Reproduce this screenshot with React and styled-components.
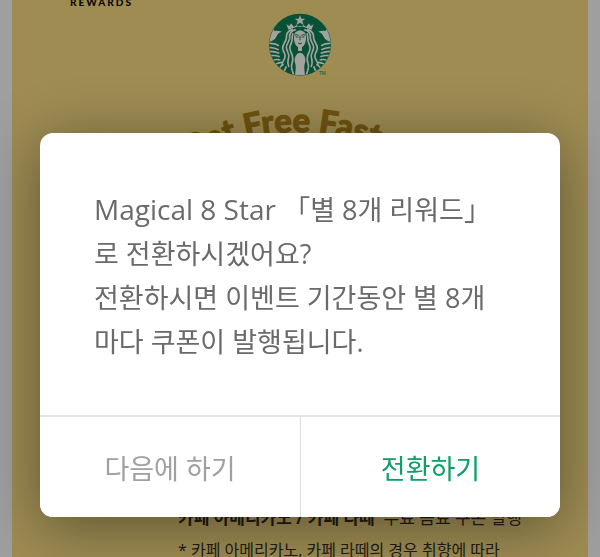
import React from 'react';
import styled, { createGlobalStyle } from 'styled-components';

const GlobalStyle = createGlobalStyle`
    * {
        box-sizing: border-box;
    }

    body {
        margin: 0;
        overflow: hidden;
        background-color: #9f9f9f;
        font-family: 'Open Sans', 'Noto Sans CJK KR', sans-serif;
    }
`;

const SirenLogo = () => {
    return (
        <Logo viewBox='-17 -17 240 240' role='img' aria-label='Starbucks'>
            <defs>
                <clipPath id='disc'>
                    <circle cx='103' cy='102' r='92' />
                </clipPath>
            </defs>
            <circle cx='103' cy='102' r='93' fill='#075137' />
            <g clipPath='url(#disc)' fill='#a2a39f'>
                {/* star and crown */}
                <path d='M103 13l4 11h12l-9 7 4 12-11-7-11 7 4-12-9-7h12z' />
                <path d='M62 41l9 5 5-8 9 11 7-6 11 7 11-7 7 6 9-11 5 8 9-5-7 17q-10-6-17-7-9-5-17-5t-17 5q-7 1-17 7z' />
                {/* tail fins */}
                <path d='M10 46q12 8 17 15 8-3 22 2-14 4-16 14-3 9-14 14-8 2-15 10 9-18 11-30-2-13-5-25z' />
                <path d='M196 46q-12 8-17 15-8-3-22 2 14 4 16 14 3 9 14 14 8 2 15 10-9-18-11-30 2-13 5-25z' />
                {/* face and body */}
                <path d='M85 77q1-16 18-18 17 2 18 18v10q-2 16-12 22v12h-12v-12q-10-6-12-22z' />
                <path d='M90 136q5-10 13-10t13 10q6 12 1 24-3 10 2 40h-32q5-30 2-40-5-12 1-24z' />
            </g>
            {/* hair strands, then the tail scales */}
            <g clipPath='url(#disc)' fill='none' stroke='#a2a39f' strokeWidth='5'>
                <path d='M90 57c-18 4-19 16-18 25s-11 18-10 29 10 18 7 29-5 17 1 29' />
                <path d='M82 56c-20 5-20 18-20 27s-12 18-11 30 10 16 7 27-10 16-9 24' />
                <path d='M82 68c-5 13 0 20-5 29s-7 17-1 28 7 22 3 33-1 20 5 34' />
                <path d='M116 57c18 4 19 16 18 25s11 18 10 29-10 18-7 29 5 17-1 29' />
                <path d='M124 56c20 5 20 18 20 27s12 18 11 30-10 16-7 27 10 16 9 24' />
                <path d='M124 68c5 13 0 20 5 29s7 17 1 28-7 22-3 33 1 20-5 34' />
                <path d='M9 98q17-1 31 7M9 110q15 0 30 7M12 122q14 0 29 6M16 135q13-2 26 3M23 148q11-3 21 0M31 160q8-5 18-5M41 172q7-8 13-11M54 183q6-9 8-16' />
                <path d='M197 98q-17-1-31 7M197 110q-15 0-30 7M194 122q-14 0-29 6M190 135q-13-2-26 3M183 148q-11-3-21 0M175 160q-8-5-18-5M165 172q-7-8-13-11M152 183q-6-9-8-16' />
            </g>
            <g fill='none' stroke='#075137' strokeWidth='3'>
                <path d='M87 74q6-4 12 0M107 74q6-4 12 0M103 75v14M97 97q6 5 12 0' />
                <path d='M90 79h8M108 79h8' />
            </g>
            <LogoMark x='160' y='192'>TM</LogoMark>
        </Logo>
    );
};

const PromoCard = () => {
    return (
        <Card>
            <Brand>REWARDS</Brand>
            <SirenLogo />
            <Banner viewBox='0 0 260 60'>
                <path id='arc' d='M-79 242a205 205 0 0 1 410 0' fill='none' />
                <BannerText>
                    <textPath href='#arc' startOffset='50%' textAnchor='middle'>
                        Get Free Faster
                    </textPath>
                </BannerText>
            </Banner>
            <Benefits>
                <Benefit>
                    <strong>카페 아메리카노 / 카페 라떼</strong>&nbsp; 무료 음료 쿠폰 발행
                </Benefit>
                <BenefitNote>* 카페 아메리카노, 카페 라떼의 경우 취향에 따라</BenefitNote>
            </Benefits>
        </Card>
    );
};

const App = () => {
    return (
        <>
            <GlobalStyle />
            <PromoCard />
            <Overlay>
                <Dialog role='dialog' aria-modal='true' aria-describedby='message'>
                    <Message id='message'>
                        <EventName>Magical 8 Star </EventName>
                        「별 8개 리워드」
                        <br />
                        로 전환하시겠어요?
                        <br />
                        전환하시면 이벤트 기간동안 별 8개
                        <br />
                        마다 쿠폰이 발행됩니다.
                    </Message>
                    <Actions>
                        <ActionButton type='button'>다음에 하기</ActionButton>
                        <ActionButton type='button' $primary>
                            전환하기
                        </ActionButton>
                    </Actions>
                </Dialog>
            </Overlay>
        </>
    );
};

const Card = styled.main`
    display: flex;
    flex-direction: column;
    align-items: center;
    min-height: 100vh;
    margin: 0 12px;
    background-color: #9e8c53;
    color: #211c11;
`;

const Brand = styled.div`
    align-self: flex-start;
    padding-left: 58px;
    color: #080704;
    font-family: Lato, sans-serif;
    font-size: 10px;
    font-weight: 900;
    letter-spacing: 2px;
    line-height: 5px;
`;

const Logo = styled.svg`
    width: 80px;
    height: 80px;
`;

const LogoMark = styled.text`
    fill: #075137;
    font-family: 'Liberation Sans', sans-serif;
    font-size: 14px;
`;

const Banner = styled.svg`
    width: 260px;
    height: 60px;
    margin-top: 10px;
`;

const BannerText = styled.text`
    fill: #6f5310;
    stroke: #6f5310;
    stroke-width: 1px;
    font-family: Lato, sans-serif;
    font-size: 33px;
    font-weight: 900;
`;

const Benefits = styled.section`
    align-self: flex-start;
    padding: 351px 0 0 166px;
    white-space: nowrap;
`;

const Benefit = styled.p`
    margin: 0;
    font-size: 17px;
    line-height: 24px;
`;

const BenefitNote = styled.p`
    margin: 8px 0 0;
    font-size: 16px;
    line-height: 24px;
`;

const Overlay = styled.div`
    position: fixed;
    top: 0;
    left: 0;
    width: 100%;
    height: 100%;
    padding: 133px 40px 40px;
`;

const Dialog = styled.div`
    overflow: hidden;
    border-radius: 13px;
    background-color: #fff;
    box-shadow: 0 10px 60px rgba(0, 0, 0, 0.4);
`;

const Message = styled.p`
    margin: 0;
    padding: 55px 54px 51px;
    color: #6a6a6a;
    font-size: 27px;
    line-height: 44px;
    white-space: nowrap;
`;

const EventName = styled.span`
    font-size: 28px;
    line-height: 1;
    white-space: pre;
`;

const Actions = styled.div`
    display: grid;
    grid-template-columns: 1fr 1fr;
    border-top: 2px solid #e3e3e3;
`;

const ActionButton = styled.button`
    height: 100px;
    padding: 0;
    border: 0;
    border-left: ${({ $primary }) => ($primary ? '1px solid #dcdcdc' : '0')};
    background-color: #fff;
    color: ${({ $primary }) => ($primary ? '#0c9f66' : '#a0a0a0')};
    font-family: inherit;
    font-size: 27px;
    cursor: pointer;
`;

export default App;
